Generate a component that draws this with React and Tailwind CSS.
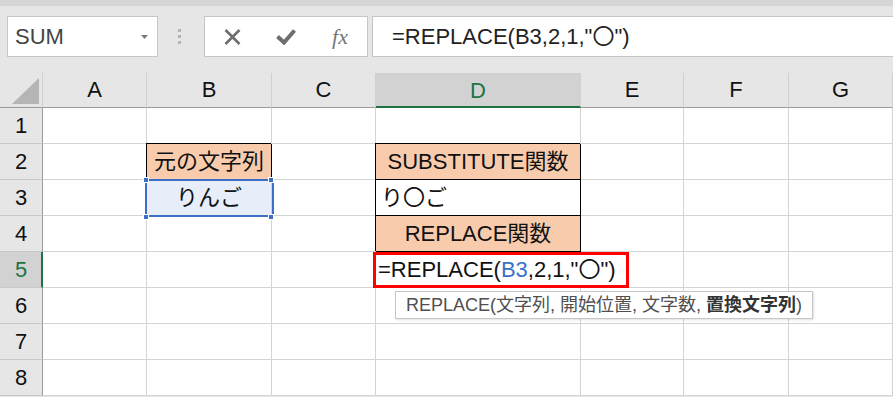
import React from "react";

const FONT = "font-['Liberation_Sans','Noto_Sans_CJK_JP',sans-serif]";
const COLS = ["A", "B", "C", "D", "E", "F", "G"];

function ColHeader({ label }) {
  const sel = label === "D";
  return (
    <div
      className={
        sel
          ? "flex items-center justify-center bg-[#d2d2d2] border-r border-r-[#d0d0d0] border-b-2 border-b-[#217346] text-[#217346] pt-[2px]"
          : "flex items-center justify-center bg-[#e6e6e6] border-r border-r-[#d0d0d0] border-b border-b-[#9b9b9b] text-[#111]"
      }
    >
      {label}
    </div>
  );
}

function RowHeader({ n }) {
  const sel = n === 5;
  return (
    <div
      className={
        sel
          ? "flex items-center justify-center bg-[#d2d2d2] border-r-2 border-r-[#217346] border-b border-b-[#c8c8c8] text-[#217346] pl-[1px]"
          : "flex items-center justify-center bg-[#e6e6e6] border-r border-r-[#9b9b9b] border-b border-b-[#c8c8c8] text-[#111]"
      }
    >
      {n}
    </div>
  );
}

const plain = "border-r border-b border-[#d4d4d4] bg-white";
const boxed =
  "border-r border-b border-black shadow-[-1px_-1px_0_0_#000] flex items-center";

function Cell({ r, c }) {
  if (r === 2 && c === "B")
    return <div className={`${boxed} justify-center bg-[#f8cbad]`}>元の文字列</div>;
  if (r === 2 && c === "D")
    return <div className={`${boxed} justify-center bg-[#f8cbad]`}>SUBSTITUTE関数</div>;
  if (r === 3 && c === "D")
    return <div className={`${boxed} justify-start pl-[5px] bg-white`}>り〇ご</div>;
  if (r === 4 && c === "D")
    return <div className={`${boxed} justify-center bg-[#f8cbad]`}>REPLACE関数</div>;
  if (r === 3 && c === "B")
    return (
      <div className="relative border-r border-b border-[#d4d4d4] bg-[#e7eef9] flex items-center justify-center">
        りんご
        <div className="absolute left-[-2px] top-[-1px] w-[129px] h-[38px] border-2 border-[#3b70c9]" />
        <div className="absolute left-[-4px] top-[-3px] w-[6px] h-[6px] bg-[#3b70c9] border border-white" />
        <div className="absolute left-[121px] top-[-3px] w-[6px] h-[6px] bg-[#3b70c9] border border-white" />
        <div className="absolute left-[-4px] top-[34px] w-[6px] h-[6px] bg-[#3b70c9] border border-white" />
        <div className="absolute left-[121px] top-[34px] w-[6px] h-[6px] bg-[#3b70c9] border border-white" />
      </div>
    );
  if (r === 5 && c === "D")
    return (
      <div className="relative border-r border-b border-[#d4d4d4] bg-white">
        <div className="absolute left-[-3px] top-0 w-[256px] h-[36px] border-[3px] border-[#ff0000] bg-white z-10 flex items-center pl-[2px] whitespace-nowrap">
          =REPLACE(<span className="text-[#3b70c9]">B3</span>,2,1,"〇")
        </div>
        <div className="absolute left-[19px] top-[39px] h-[28px] bg-white border border-[#c6c6c6] shadow-[1px_1px_2px_rgba(0,0,0,0.12)] z-10 flex items-center px-[10px] whitespace-nowrap text-[18px] text-[#505050]">
          REPLACE(文字列, 開始位置, 文字数,&nbsp;
          <span className="font-bold text-[#333]">置換文字列</span>)
        </div>
      </div>
    );
  return <div className={plain} />;
}

export default function App() {
  return (
    <div className={`w-[893px] h-[397px] overflow-hidden bg-[#e6e6e6] ${FONT} text-[#111]`}>
      {/* toolbar */}
      <div className="h-[73px]">
        <div className="h-[6px] bg-[#d6d6d6]" />
        <div className="flex items-center mt-[10px] h-[41px]">
          <div className="shrink-0 ml-[7px] w-[151px] h-full bg-white border border-[#c6c6c6] flex items-center justify-between pl-[7px] pr-[9px]">
            <span className="text-[22px] text-[#444] leading-none">SUM</span>
            <svg width="7" height="4" viewBox="0 0 7 4">
              <path d="M0 0h7L3.5 4z" fill="#7a7a7a" />
            </svg>
          </div>
          <div className="shrink-0 ml-[20px] w-[4px] flex flex-col gap-[3px]">
            <div className="w-[3px] h-[3px] bg-[#b4b4b4]" />
            <div className="w-[3px] h-[3px] bg-[#b4b4b4]" />
            <div className="w-[3px] h-[3px] bg-[#b4b4b4]" />
          </div>
          <div className="shrink-0 ml-[22px] w-[164px] h-full bg-white border border-[#c6c6c6] flex items-center">
            <div className="w-[55px] flex items-center justify-center">
              <svg width="17" height="16" viewBox="0 0 17 16">
                <path d="M1.5 1L15.5 15M15.5 1L1.5 15" stroke="#6e6e6e" strokeWidth="2.6" />
              </svg>
            </div>
            <div className="w-[55px] flex items-center justify-center">
              <svg width="20" height="16" viewBox="0 0 20 16">
                <path d="M1.5 7.5L8 13.5L18.5 1.5" stroke="#6e6e6e" strokeWidth="4" fill="none" strokeLinejoin="miter" />
              </svg>
            </div>
            <div className="w-[55px] flex items-center justify-center">
              <span className="font-['Liberation_Serif',serif] italic text-[22px] text-[#777] leading-none">fx</span>
            </div>
          </div>
          <div className="ml-[4px] w-[540px] shrink-0 h-full bg-white border border-[#c6c6c6] flex items-center pl-[19px] text-[22px] text-[#222] leading-none">
            =REPLACE(B3,2,1,"〇")
          </div>
        </div>
      </div>

      {/* sheet */}
      <div className="grid grid-cols-[43px_104px_125px_104px_205px_103px_105px_104px] grid-rows-[35px_repeat(8,36px)] text-[22px] leading-none">
        <div className="relative bg-[#e6e6e6] border-r border-r-[#d0d0d0] border-b border-b-[#9b9b9b]">
          <svg className="absolute left-[12px] top-[5px]" width="27" height="26" viewBox="0 0 27 26">
            <path d="M27 0V26H0Z" fill="#b5b5b5" />
          </svg>
        </div>
        {COLS.map((c) => (
          <ColHeader key={c} label={c} />
        ))}
        {[1, 2, 3, 4, 5, 6, 7, 8].map((r) => (
          <React.Fragment key={r}>
            <RowHeader n={r} />
            {COLS.map((c) => (
              <Cell key={c} r={r} c={c} />
            ))}
          </React.Fragment>
        ))}
      </div>
    </div>
  );
}
